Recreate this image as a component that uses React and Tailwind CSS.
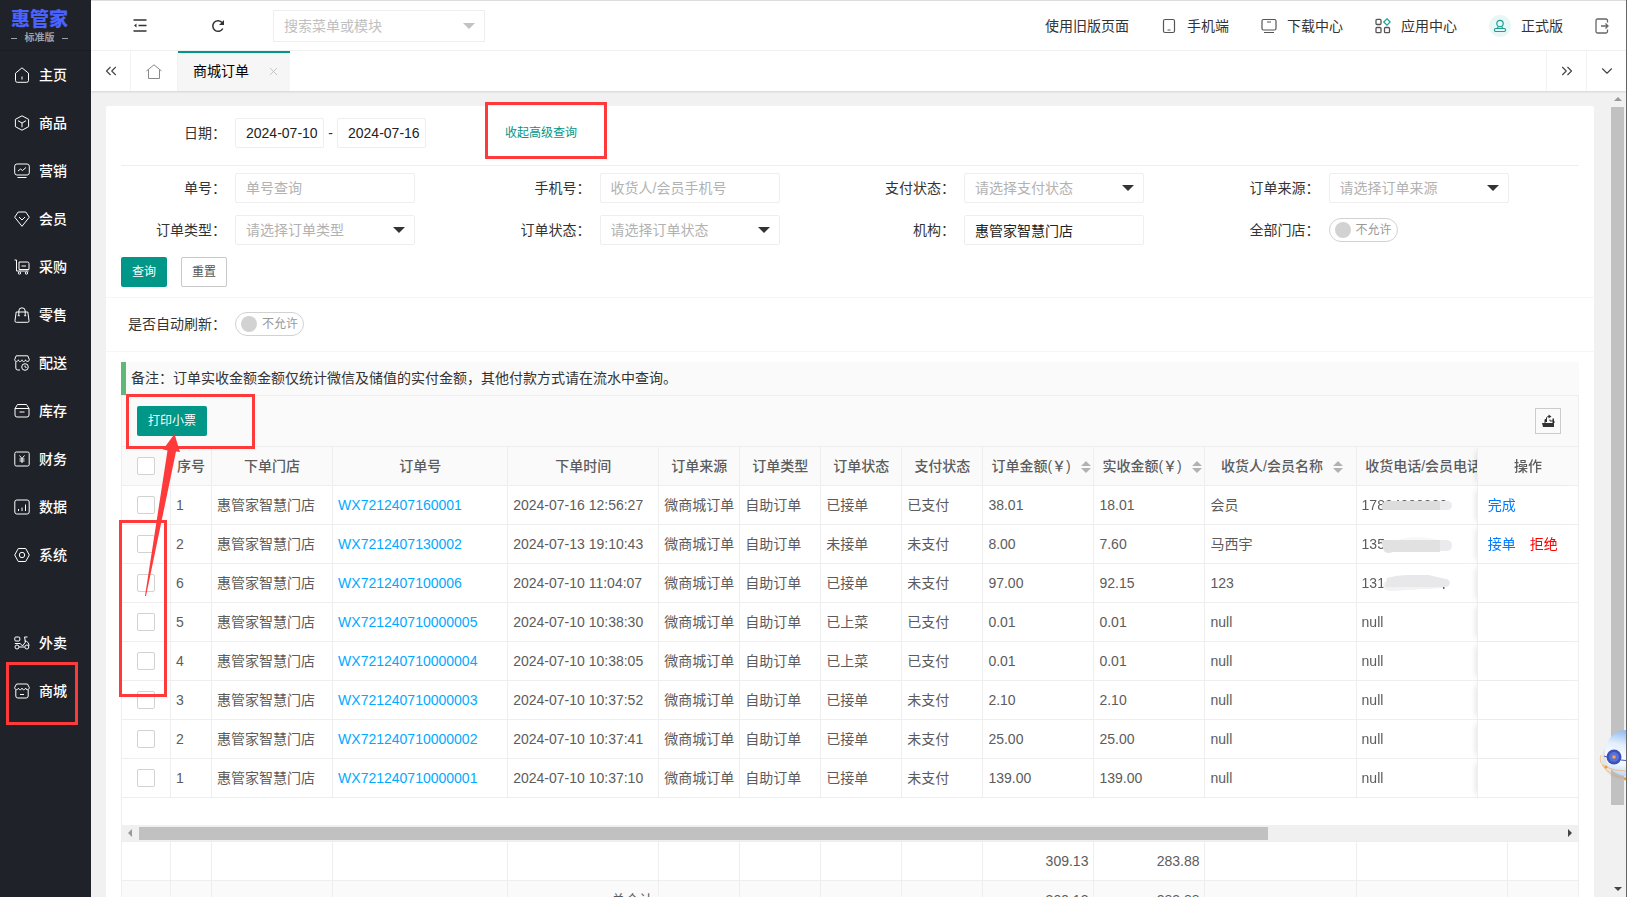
import { useState } from 'react'
import clsx from 'clsx'
import { ChevronDown, ChevronsLeft, ChevronsRight, X } from 'lucide-react'

const RED_BOX = 'absolute z-20 border-3 border-[#ff3a3a] pointer-events-none'

const SIDE_ICONS = {
  home: (
    <>
      <path d="M1.5 6.2 8 .8l6.5 5.4v7.3a1.8 1.8 0 0 1-1.8 1.8H3.300a1.800 1.800 0 0 1-1.800-1.800z" />
      <path d="M8 9.500v3" />
    </>
  ),
  goods: (
    <>
      <path d="M8 .8 14.600 4.300v7.400L8 15.200 1.400 11.700V4.300z" />
      <path d="M4 5.700 8 8l4-2.300M8 8v4.300" />
    </>
  ),
  marketing: (
    <>
      <rect x=".7" y="1" width="14.600" height="11" rx="2.200" />
      <path d="M4 8l2.500-2 2 1.500L12 4.500M3.500 14.500h9" />
    </>
  ),
  member: (
    <>
      <path d="M4.200 1h7.600l3.500 5.200L8 15.300.7 6.200z" />
      <path d="M5 6l3 3 3-3" />
    </>
  ),
  purchase: (
    <>
      <path d="M.5 1h2v11h12M5 3h8.500a1.500 1.500 0 0 1 1.500 1.500v6H5zM7.500 7h4.500" />
      <circle cx="5.500" cy="14" r="1.200" />
      <circle cx="12.500" cy="14" r="1.200" />
    </>
  ),
  retail: (
    <>
      <path d="M2.200 5h11.600l1.200 8.500a1.500 1.500 0 0 1-1.500 1.800h-11A1.500 1.500 0 0 1 1 13.500z" />
      <path d="M4.800 8.500V4a3.200 3.200 0 0 1 6.400 0v4.500" />
      <path d="M3.800 8.700h2M10.200 8.700h2" />
    </>
  ),
  delivery: (
    <>
      <path d="M1.800 6.500V13a2 2 0 0 0 2 2H6M14 7V6.500M2.200.8h11.600L15.300 4.500c0 2.500-3.600 2.500-3.800.3-.3 2.300-3.300 2.300-3.500 0-.3 2.300-3.300 2.300-3.600 0C4 7 .7 7 .7 4.500z" />
      <circle cx="11" cy="12" r="3.300" />
      <path d="M11 10.500V12l1.500.5" />
    </>
  ),
  stock: (
    <>
      <path d="M1 5.500 3.500 1.500h9L15 5.500V12a2 2 0 0 1-2 2H3a2 2 0 0 1-2-2zM1 5.500h14M5.500 9h5" />
    </>
  ),
  finance: (
    <>
      <rect x=".8" y="1" width="14.400" height="14" rx="1.500" />
      <path d="M5.500 4.500 8 7.500l2.500-3M8 7.500V12M5.500 8h5M5.500 10h5" />
    </>
  ),
  data: (
    <>
      <rect x=".8" y="1" width="14.400" height="14" rx="2" />
      <path d="M4.500 12v-2M8 12V8.500M11.500 12V5.500" />
    </>
  ),
  system: (
    <>
      <path d="M4.300 1.500h7.400L15.300 8l-3.600 6.500H4.300L.7 8z" />
      <circle cx="8" cy="8" r="2.700" />
    </>
  ),
  takeout: (
    <>
      <rect x=".8" y="2" width="5" height="4" rx="1" />
      <path d="M.8 8.500h5.500L8.500 11l3-4-1-5h3M10.500 6c3 0 4.500 2 4.500 5M5 12h5.500" />
      <circle cx="3" cy="12" r="2" />
      <circle cx="12.800" cy="12" r="2" />
    </>
  ),
  mall: (
    <>
      <path d="M1.800 6.800V13a2 2 0 0 0 2 2h8.400a2 2 0 0 0 2-2V6.800" />
      <path d="M2.500 1h11l1.800 3.500c0 2.800-3.500 2.800-3.800.5-.3 2.300-3.300 2.300-3.500 0-.3 2.300-3.300 2.300-3.500 0-.4 2.300-3.800 2.300-3.800-.5zM6 11.500h4" />
    </>
  ),
}

const MENU = [
  { icon: 'home', label: '主页' },
  { icon: 'goods', label: '商品' },
  { icon: 'marketing', label: '营销' },
  { icon: 'member', label: '会员' },
  { icon: 'purchase', label: '采购' },
  { icon: 'retail', label: '零售' },
  { icon: 'delivery', label: '配送' },
  { icon: 'stock', label: '库存' },
  { icon: 'finance', label: '财务' },
  { icon: 'data', label: '数据' },
  { icon: 'system', label: '系统' },
]

const MENU_EXTRA = [
  { icon: 'takeout', label: '外卖' },
  { icon: 'mall', label: '商城', marked: true },
]

const STORE = '惠管家智慧门店'

const ORDERS = [
  { idx: 1, no: 'WX7212407160001', time: '2024-07-16 12:56:27', status: '已接单', pay: '已支付', amount: '38.01', paid: '18.01', name: '会员', phone: '17834000000', mask: 'a', actions: ['完成'] },
  { idx: 2, no: 'WX7212407130002', time: '2024-07-13 19:10:43', status: '未接单', pay: '未支付', amount: '8.00', paid: '7.60', name: '马西宇', phone: '135', mask: 'b', actions: ['接单', '拒绝'] },
  { idx: 6, no: 'WX7212407100006', time: '2024-07-10 11:04:07', status: '已接单', pay: '未支付', amount: '97.00', paid: '92.15', name: '123', phone: '131', mask: 'c', actions: [] },
  { idx: 5, no: 'WX721240710000005', time: '2024-07-10 10:38:30', status: '已上菜', pay: '已支付', amount: '0.01', paid: '0.01', name: 'null', phone: 'null', actions: [] },
  { idx: 4, no: 'WX721240710000004', time: '2024-07-10 10:38:05', status: '已上菜', pay: '已支付', amount: '0.01', paid: '0.01', name: 'null', phone: 'null', actions: [] },
  { idx: 3, no: 'WX721240710000003', time: '2024-07-10 10:37:52', status: '已接单', pay: '未支付', amount: '2.10', paid: '2.10', name: 'null', phone: 'null', actions: [] },
  { idx: 2, no: 'WX721240710000002', time: '2024-07-10 10:37:41', status: '已接单', pay: '未支付', amount: '25.00', paid: '25.00', name: 'null', phone: 'null', actions: [] },
  { idx: 1, no: 'WX721240710000001', time: '2024-07-10 10:37:10', status: '已接单', pay: '未支付', amount: '139.00', paid: '139.00', name: 'null', phone: 'null', actions: [] },
]

const HEADERS = [
  { label: '序号' },
  { label: '下单门店' },
  { label: '订单号' },
  { label: '下单时间' },
  { label: '订单来源' },
  { label: '订单类型' },
  { label: '订单状态' },
  { label: '支付状态' },
  { label: '订单金额(￥)', sort: true },
  { label: '实收金额(￥)', sort: true },
  { label: '收货人/会员名称', sort: true },
  { label: '收货电话/会员电话', sort: true },
]

const TH = 'h-[39px] border-r border-b border-[#eee] bg-[#fafafa] font-medium whitespace-nowrap overflow-hidden'
const TD = 'h-[39px] border-r border-b border-[#eee] px-[5px] whitespace-nowrap overflow-hidden'

function Columns() {
  return (
    <colgroup>
      <col className="w-[49px]" />
      <col className="w-[41px]" />
      <col className="w-[121px]" />
      <col className="w-[175px]" />
      <col className="w-[151px]" />
      <col className="w-[81px]" />
      <col className="w-[81px]" />
      <col className="w-[81px]" />
      <col className="w-[81px]" />
      <col className="w-[111px]" />
      <col className="w-[111px]" />
      <col className="w-[151px]" />
      <col className="w-[151px]" />
      <col className="w-[350px]" />
      <col className="w-[101px]" />
    </colgroup>
  )
}

function SideItem({ item }) {
  return (
    <li className="relative">
      <a href="#" className="flex h-12 items-center gap-[9px] pl-[14px] text-sm font-medium text-white">
        <svg viewBox="0 0 16 16" className="size-4 fill-none stroke-white">
          {SIDE_ICONS[item.icon]}
        </svg>
        {item.label}
      </a>
      {item.marked && <span className={clsx(RED_BOX, '-top-[5px] left-[6px] h-[63px] w-[72px]')} />}
    </li>
  )
}

function Sidebar() {
  return (
    <aside className="w-[91px] shrink-0 bg-[#20222a]">
      <div className="flex h-[51px] flex-col items-center justify-end border-b border-[#1b1d24] pr-3 pb-1">
        <div className="text-[19px] leading-5 font-black text-[#4a63ff]">惠管家</div>
        <div className="flex w-[57px] items-center justify-between text-[10px] leading-4 font-bold text-gray-400">
          <span className="h-px w-[6px] bg-gray-400" />
          标准版
          <span className="h-px w-[6px] bg-gray-400" />
        </div>
      </div>
      <ul>{MENU.map((item) => <SideItem key={item.label} item={item} />)}</ul>
      <ul className="mt-10">{MENU_EXTRA.map((item) => <SideItem key={item.label} item={item} />)}</ul>
    </aside>
  )
}

function Caret({ className }) {
  return (
    <svg viewBox="0 0 12 6" className={clsx('pointer-events-none absolute right-[10px] top-1/2 -mt-[3px] h-[6px] w-3', className)}>
      <path d="M0 0h12L6 6z" />
    </svg>
  )
}

function TopBar() {
  return (
    <header className="flex h-[51px] items-center border-t border-b border-t-[#ddd] border-b-[#f2f2f2] bg-white pl-[42px] pr-[17px] text-sm text-[#333]">
      <button aria-label="收起菜单">
        <svg viewBox="0 0 14 13" className="h-[13px] w-[14px] fill-none stroke-[#333]">
          <path d="M.5 1h13M5.500 6.500h8M.5 12h13" strokeWidth="1.300" />
          <path d="M3.500 4.500v4L1 6.500z" className="fill-[#333] stroke-none" />
        </svg>
      </button>
      <button aria-label="刷新" className="ml-16">
        <svg viewBox="0 0 14 14" className="size-[14px] fill-none stroke-[#333]">
          <path d="M11.800 9.500A5.300 5.300 0 1 1 11.300 3.800" strokeWidth="1.500" />
          <path d="M13 1v5H8z" className="fill-[#333] stroke-none" />
        </svg>
      </button>
      <div className="relative ml-12">
        <select aria-label="搜索菜单或模块" className="h-8 w-[212px] appearance-none border border-[#eee] pl-[10px] text-sm text-[#c0c0c0]">
          <option>搜索菜单或模块</option>
        </select>
        <Caret className="fill-[#c2c2c2]" />
      </div>
      <nav className="ml-auto flex items-center gap-8">
        <a href="#">使用旧版页面</a>
        <a href="#" className="flex items-center gap-[10px]">
          <svg viewBox="0 0 16 16" className="size-4 fill-none stroke-[#555]">
            <rect x="2.500" y="1.500" width="11" height="13" rx="1.500" strokeWidth="1.200" />
            <path d="M6.500 12h3" />
          </svg>
          手机端
        </a>
        <a href="#" className="flex items-center gap-[10px]">
          <svg viewBox="0 0 16 16" className="size-4 fill-none stroke-[#555]">
            <rect x="1" y="1.500" width="14" height="10.500" rx="1.500" strokeWidth="1.200" />
            <path d="M6 4h4M3 14.500h10" strokeWidth="1.200" />
          </svg>
          下载中心
        </a>
        <a href="#" className="flex items-center gap-[10px]">
          <svg viewBox="0 0 16 16" className="size-4 fill-none stroke-[#555]" strokeWidth="1.300">
            <rect x="1" y="1.300" width="5" height="5.200" rx="1" />
            <rect x="1" y="9.500" width="5" height="5.200" rx="1" />
            <rect x="9.500" y="9.500" width="5" height="5.200" rx="1" />
            <path d="M12 .8 15.200 4 12 7.200 8.800 4z" className="stroke-[#26a69a]" />
          </svg>
          应用中心
        </a>
        <a href="#" className="flex items-center gap-[10px]">
          <svg viewBox="0 0 22 22" className="size-[22px] fill-none stroke-[#1aa094]" strokeWidth="1.200">
            <circle cx="11" cy="11" r="11" className="fill-[#e8f6f5] stroke-none" />
            <circle cx="11" cy="8.500" r="3.200" />
            <rect x="5.500" y="13.500" width="11" height="3" rx="1.200" />
            <path d="M9.500 11.500 8 13.500M12.500 11.500l1.500 2" />
          </svg>
          正式版
        </a>
        <button aria-label="退出">
          <svg viewBox="0 0 14 16" className="h-4 w-[14px] fill-none stroke-[#666]" strokeWidth="1.300">
            <path d="M12.500 4.500V2.500a1.500 1.500 0 0 0-1.500-1.500H2.500A1.500 1.500 0 0 0 1 2.500v11A1.500 1.500 0 0 0 2.500 15H11a1.500 1.500 0 0 0 1.500-1.500v-2M6 8h7M10.500 5.500 13 8l-2.500 2.500" />
          </svg>
        </button>
      </nav>
    </header>
  )
}

function TabBar() {
  return (
    <div className="relative z-10 flex h-10 bg-white text-sm text-[#444] shadow-[0_1px_2px_rgba(0,0,0,0.12)]">
      <button aria-label="向左" className="flex w-10 items-center justify-center border-r border-[#f2f2f2]">
        <ChevronsLeft size={18} strokeWidth={1.500} />
      </button>
      <button aria-label="首页" className="flex w-[47px] items-center justify-center border-r border-[#f2f2f2]">
        <svg viewBox="0 0 16 15" className="h-[15px] w-4 fill-none stroke-[#888]">
          <path d="M.5 7 8 .8 15.500 7M2.500 5.500v9h11v-9" />
        </svg>
      </button>
      <div className="flex w-28 items-center justify-between border-t-2 border-[#009688] bg-[#f6f6f6] pr-[10px] pb-[2px] pl-[15px] text-black">
        商城订单
        <button aria-label="关闭" className="text-[#bbb]">
          <X size={13} strokeWidth={1.500} />
        </button>
      </div>
      <button aria-label="向右" className="ml-auto flex w-10 items-center justify-center border-l border-[#f2f2f2]">
        <ChevronsRight size={18} strokeWidth={1.500} />
      </button>
      <button aria-label="更多" className="flex w-10 items-center justify-center border-l border-[#f2f2f2]">
        <ChevronDown size={18} strokeWidth={1.500} />
      </button>
    </div>
  )
}

function Field({ id, label, children }) {
  return (
    <div className="flex h-[30px] items-center">
      <label htmlFor={id} className="w-[114px] shrink-0 pr-[9px] text-right whitespace-nowrap">{label}：</label>
      {children}
    </div>
  )
}

const INPUT = 'h-[30px] rounded-xs border border-[#eee] bg-white pl-[10px] text-sm placeholder:text-[#b2b2b2]'

function SelectBox({ id, placeholder }) {
  return (
    <div className="relative">
      <select id={id} className={clsx(INPUT, 'w-[180px] appearance-none text-[#b2b2b2]')}>
        <option>{placeholder}</option>
      </select>
      <Caret className="fill-[#333]" />
    </div>
  )
}

function Toggle({ id }) {
  const [on, setOn] = useState(false)
  return (
    <label className="relative flex h-6 w-[69px] items-center gap-[5px] rounded-full border border-[#d2d2d2] pl-[5px] text-xs text-[#999]">
      <input id={id} type="checkbox" className="absolute inset-0 opacity-0" checked={on} onChange={(e) => setOn(e.target.checked)} />
      <span className="size-4 rounded-full bg-[#d2d2d2]" />
      {on ? '允许' : '不允许'}
    </label>
  )
}

function SearchForm() {
  return (
    <form className="text-sm text-[#333]" onSubmit={(e) => e.preventDefault()}>
      <div className="mx-[15px] border-b border-[#eee] pt-3 pb-[17px]">
        <Field id="date-start" label="日期">
          <input id="date-start" defaultValue="2024-07-10" className={clsx(INPUT, 'w-[89px] text-[#222]')} />
          <span className="w-[13px] text-center">-</span>
          <input aria-label="结束日期" defaultValue="2024-07-16" className={clsx(INPUT, 'w-[89px] text-[#222]')} />
          <div className="relative ml-[79px]">
            <button type="button" className="block text-xs text-[#009688]">收起高级查询</button>
            <span className={clsx(RED_BOX, '-top-[23px] -left-5 h-[57px] w-[122px]')} />
          </div>
        </Field>
      </div>
      <div className="mx-[15px] mt-[7px] grid grid-cols-4 gap-y-3">
        <Field id="order-no" label="单号">
          <input id="order-no" placeholder="单号查询" className={clsx(INPUT, 'w-[180px]')} />
        </Field>
        <Field id="mobile" label="手机号">
          <input id="mobile" placeholder="收货人/会员手机号" className={clsx(INPUT, 'w-[180px]')} />
        </Field>
        <Field id="pay-status" label="支付状态">
          <SelectBox id="pay-status" placeholder="请选择支付状态" />
        </Field>
        <Field id="order-source" label="订单来源">
          <SelectBox id="order-source" placeholder="请选择订单来源" />
        </Field>
        <Field id="order-type" label="订单类型">
          <SelectBox id="order-type" placeholder="请选择订单类型" />
        </Field>
        <Field id="order-status" label="订单状态">
          <SelectBox id="order-status" placeholder="请选择订单状态" />
        </Field>
        <Field id="org" label="机构">
          <input id="org" defaultValue={STORE} className={clsx(INPUT, 'w-[180px] text-[#222]')} />
        </Field>
        <Field id="all-stores" label="全部门店">
          <Toggle id="all-stores" />
        </Field>
      </div>
      <div className="mt-3 flex gap-[14px] border-b border-[#f6f6f6] px-[15px] pb-[10px] text-xs">
        <button type="submit" className="h-[30px] w-[46px] rounded-xs bg-[#009688] text-white">查询</button>
        <button type="reset" className="h-[30px] w-[46px] rounded-xs border border-[#c9c9c9] text-[#555]">重置</button>
      </div>
      <div className="border-b border-[#f6f6f6] px-[15px] pt-[11px] pb-3">
        <Field id="auto-refresh" label="是否自动刷新">
          <Toggle id="auto-refresh" />
        </Field>
      </div>
    </form>
  )
}

function CheckBox({ label }) {
  return (
    <input
      type="checkbox"
      aria-label={label}
      className="block size-[18px] appearance-none rounded-xs border border-[#d2d2d2] bg-white mx-auto checked:bg-[#009688]"
    />
  )
}

function SortIcon() {
  return (
    <svg viewBox="0 0 10 12" className="ml-[10px] inline-block h-3 w-[10px] fill-[#b2b2b2]">
      <path d="M5 0l5 5H0zM5 12l5-5H0z" />
    </svg>
  )
}

function PhoneMask({ kind }) {
  return (
    <svg viewBox="0 0 72 18" className="absolute top-[10px] left-6 h-[18px] w-[72px]">
      {kind === 'a' && (
        <>
          <rect x="40" y="5" width="31" height="9" rx="4.500" fill="#ebebed" />
          <path d="M4 5h55v9H2q-4-4 2-9z" fill="#dedddd" />
        </>
      )}
      {kind === 'b' && (
        <>
          <path d="M16 5Q35-1 58 5l6 1v10H20z" fill="#f7f7f7" />
          <rect x="40" y="5" width="31" height="11" rx="5.500" fill="#ebebee" />
          <path d="M0 5h59v12H12q-9 3-10-4z" fill="#e1e1e2" />
        </>
      )}
      {kind === 'c' && (
        <>
          <path d="M3 8h60v6q-36 2-52 3-12 0-8-9z" fill="#f2f2f3" />
          <path d="M6 4q10-3 20-3h22q12 3 18 4 6 4 0 8H4z" fill="#e8e8ea" />
          <path d="M62 13h1.500v2H62z" fill="#666" />
        </>
      )}
    </svg>
  )
}

const PINNED = 'sticky right-0 h-[39px] border-b border-l border-[#eee] whitespace-nowrap shadow-[-5px_0_6px_-4px_rgba(0,0,0,0.12)]'

function OrderTable() {
  return (
    <div className="overflow-hidden">
      <table className="w-[1837px] table-fixed border-separate border-spacing-0 text-sm text-[#5c5c5c]">
        <Columns />
        <thead>
          <tr>
            <th className={TH}><CheckBox label="全选" /></th>
            {HEADERS.map((h) => (
              <th key={h.label} className={clsx(TH, h.sort ? 'pr-[5px] pl-2' : 'px-[5px]')}>
                {h.label}
                {h.sort && <SortIcon />}
              </th>
            ))}
            <th className={TH} />
            <th className={clsx(PINNED, 'bg-[#fafafa] font-medium')}>操作</th>
          </tr>
        </thead>
        <tbody>
          {ORDERS.map((o) => (
            <tr key={o.no}>
              <td className={TD}><CheckBox label={o.no} /></td>
              <td className={TD}>{o.idx}</td>
              <td className={TD}>{STORE}</td>
              <td className={TD}><a href="#" className="text-[#01aaff]">{o.no}</a></td>
              <td className={TD}>{o.time}</td>
              <td className={TD}>微商城订单</td>
              <td className={TD}>自助订单</td>
              <td className={TD}>{o.status}</td>
              <td className={TD}>{o.pay}</td>
              <td className={TD}>{o.amount}</td>
              <td className={TD}>{o.paid}</td>
              <td className={TD}>{o.name}</td>
              <td className={clsx(TD, 'relative')}>
                {o.phone}
                {o.mask && <PhoneMask kind={o.mask} />}
              </td>
              <td className={TD} />
              <td className={clsx(PINNED, 'bg-white px-[10px]')}>
                <div className="flex gap-[14px]">
                  {o.actions.map((a) => (
                    <a key={a} href="#" className={a === '拒绝' ? 'text-[#ff0000]' : 'text-[#007bff]'}>{a}</a>
                  ))}
                </div>
              </td>
            </tr>
          ))}
        </tbody>
      </table>
    </div>
  )
}

function SummaryTable() {
  const rows = [
    { label: '', amount: '309.13', paid: '283.88' },
    { label: '总合计', amount: '309.13', paid: '283.88' },
  ]
  return (
    <div className="overflow-hidden border-t border-[#eee]">
      <table className="w-[1837px] table-fixed border-separate border-spacing-0 text-right text-sm text-[#5c5c5c]">
        <Columns />
        <tbody>
          {rows.map((r, i) => (
            <tr key={i} className={i === 1 ? 'bg-[#fafafa]' : ''}>
              {Array.from({ length: 15 }, (_, c) => (
                <td key={c} className={TD}>
                  {c === 4 && r.label}
                  {c === 9 && r.amount}
                  {c === 10 && r.paid}
                </td>
              ))}
            </tr>
          ))}
        </tbody>
      </table>
    </div>
  )
}

function Arrow() {
  return (
    <svg viewBox="0 0 40 166" className="pointer-events-none absolute top-[38px] left-[18px] z-20 h-[166px] w-10 fill-[#ff3a3a]">
      <path d="M34.500 0 40 18 36 17.500 6 162H5L27.500 16.500 23 15.500z" />
    </svg>
  )
}

function OrderPanel() {
  return (
    <section className="mx-[15px] mt-[10px]">
      <p className="h-[33px] border-l-5 border-[#5fb878] bg-[#fafafa] pl-[5px] text-sm leading-[33px] text-[#333]">
        备注：订单实收金额金额仅统计微信及储值的实付金额，其他付款方式请在流水中查询。
      </p>
      <div className="relative border border-[#eee]">
        <div className="flex h-[51px] items-center justify-between border-b border-[#eee] bg-[#fafafa] pl-[15px] pr-[17px]">
          <button className="h-[30px] w-[70px] rounded-xs bg-[#009688] text-xs text-white">打印小票</button>
          <button aria-label="导出" className="flex size-[26px] items-center justify-center border border-[#ccc]">
            <svg viewBox="0 0 14 14" className="size-[14px] fill-[#333]">
              <path d="M1 9h12v4H2zM4 6h2v2H4zM11.500 4.500H13V9h-1.500z" />
              <path d="M4 9V5.500h2M5.500 5.500V3.500Q6 2.500 8 2.500M9 5.500v1.500H13V9" fill="none" stroke="#333" />
              <path d="M7.500.5 10.500 2.500 7.500 4.500z" />
            </svg>
          </button>
        </div>
        <OrderTable />
        {/* horizontal scroll bar of the order list */}
        <div className="mt-[27px] flex h-4 items-center justify-between bg-[#f0f0f0] px-[6px]">
          <svg viewBox="0 0 4 8" className="h-2 w-1 fill-[#999]"><path d="M4 0v8L0 4z" /></svg>
          <div className="ml-[7px] flex-1">
            <div className="h-[13px] w-[79%] bg-[#c1c1c1]" />
          </div>
          <svg viewBox="0 0 4 8" className="h-2 w-1 fill-[#444]"><path d="M0 0v8l4-4z" /></svg>
        </div>
        <SummaryTable />
        <span className={clsx(RED_BOX, '-top-[2px] left-1 h-[55px] w-[129px]')} />
        <span className={clsx(RED_BOX, 'top-[124px] -left-[3px] h-[177px] w-12')} />
        <Arrow />
      </div>
    </section>
  )
}

function PageScrollbar() {
  return (
    <div className="flex w-[17px] shrink-0 flex-col items-center justify-between bg-[#f1f1f1] py-[6px]">
      <svg viewBox="0 0 8 4" className="h-1 w-2 fill-[#999]"><path d="M0 4h8L4 0z" /></svg>
      <div className="mt-[6px] mb-1 w-[13px] flex-1">
        <div className="h-[90%] bg-[#c1c1c1]" />
      </div>
      <svg viewBox="0 0 8 4" className="h-1 w-2 fill-[#444]"><path d="M0 0h8L4 4z" /></svg>
    </div>
  )
}

function Assistant() {
  return (
    <button aria-label="智能助手" className="absolute right-px bottom-[112px] z-30">
      <svg viewBox="0 0 28 58" className="h-[58px] w-7">
        <defs>
          <linearGradient id="shell" x1="0.600" y1="0" x2="0.400" y2="1">
            <stop offset="0" stopColor="#86b4f2" />
            <stop offset="0.350" stopColor="#e3effc" />
            <stop offset="0.700" stopColor="#ffffff" />
            <stop offset="1" stopColor="#bcd6f6" />
          </linearGradient>
        </defs>
        <ellipse cx="24" cy="32" rx="20" ry="20" fill="#99a" opacity=".15" />
        <ellipse cx="28" cy="26" rx="21" ry="23" fill="url(#shell)" />
        <circle cx="16" cy="30" r="7.500" fill="#3c50b8" />
        <circle cx="16" cy="30" r="5" fill="#5870d8" />
        <circle cx="16" cy="30" r="1.800" fill="#f5a54a" />
        <path d="M6 29l3 1M23 33l5 .5" stroke="#3c50b8" fill="none" />
        <path d="M3 28Q0 36 8 40q8 4 20 4M4 38q8 12 24 13" stroke="#f6a24a" fill="none" strokeWidth=".6" />
        <circle cx="8" cy="40" r="1.600" fill="#f79a35" />
        <circle cx="27" cy="52" r="1.400" fill="#f79a35" />
      </svg>
    </button>
  )
}

export default function App() {
  return (
    <div className="relative flex h-screen overflow-hidden bg-[#f1f1f1] font-['Liberation_Sans','Noto_Sans_CJK_SC',sans-serif]">
      <Sidebar />
      <div className="flex min-w-0 flex-1 flex-col border-r border-[#666]">
        <TopBar />
        <TabBar />
        <div className="flex min-h-0 flex-1">
          <main className="min-w-0 flex-1 overflow-hidden p-[15px]">
            <div className="rounded-xs bg-white pb-4">
              <SearchForm />
              <OrderPanel />
            </div>
          </main>
          <PageScrollbar />
        </div>
      </div>
      <Assistant />
    </div>
  )
}
